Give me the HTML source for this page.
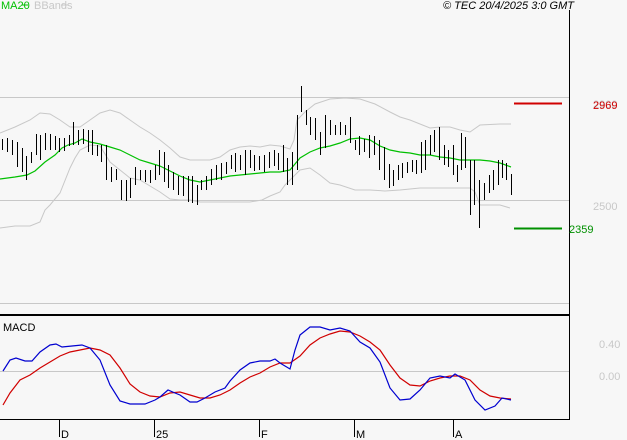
<!DOCTYPE html>
<html><head><meta charset="utf-8"><style>
html,body{margin:0;padding:0;background:#f7f7f7;width:627px;height:440px;overflow:hidden}
svg{display:block}
text{font-family:"Liberation Sans",sans-serif;font-size:11px}
</style></head><body>
<svg width="627" height="440" viewBox="0 0 627 440" shape-rendering="crispEdges">
<rect width="627" height="440" fill="#f7f7f7"/>
<text x="1" y="9" fill="#00c000" font-size="10">MA20</text>
<line x1="22" y1="5" x2="28" y2="5" stroke="#00c000"/>
<text x="34" y="9" fill="#c8c8c8" font-size="10">BBands</text>
<line x1="61" y1="5" x2="68" y2="5" stroke="#c8c8c8"/>
<text x="574" y="9" fill="#000" font-size="10.5" font-style="italic" text-anchor="end">© TEC 20/4/2025 3:0 GMT</text>
<line x1="0" y1="97.5" x2="569" y2="97.5" stroke="#c8c8c8"/>
<line x1="0" y1="200.5" x2="569" y2="200.5" stroke="#c8c8c8"/>
<line x1="0" y1="303.5" x2="569" y2="303.5" stroke="#c8c8c8"/>
<line x1="0" y1="371.5" x2="569" y2="371.5" stroke="#c8c8c8"/>
<line x1="0" y1="315" x2="569" y2="315" stroke="#000" stroke-width="2"/>
<line x1="0" y1="419.5" x2="569" y2="419.5" stroke="#000"/>
<line x1="569.5" y1="10" x2="569.5" y2="420" stroke="#000"/>
<g stroke="#000"><line x1="59.5" y1="420" x2="59.5" y2="437"/><line x1="154.5" y1="420" x2="154.5" y2="437"/><line x1="259.5" y1="420" x2="259.5" y2="437"/><line x1="354.5" y1="420" x2="354.5" y2="437"/><line x1="453.5" y1="420" x2="453.5" y2="437"/></g>
<g font-size="11" fill="#000"><text x="61" y="438">D</text><text x="156" y="438">25</text><text x="261" y="438">F</text><text x="356" y="438">M</text><text x="455" y="438">A</text></g>
<text x="3" y="331" font-size="10" fill="#000">MACD</text>
<g fill="#c8c8c8" font-size="11"><text x="593" y="108">2900</text><text x="593" y="210">2500</text><text x="599" y="348">0.40</text><text x="599" y="380">0.00</text></g>
<text x="593" y="109" fill="#d00000">2969</text>
<text x="569" y="233" fill="#009000">2359</text>
<line x1="514" y1="103.5" x2="562" y2="103.5" stroke="#d00000" stroke-width="2"/>
<line x1="514" y1="228.5" x2="562" y2="228.5" stroke="#009000" stroke-width="2"/>
<g fill="none" stroke="#c8c8c8" shape-rendering="auto">
<polyline points="0,133 15,127 30,120 40,113 50,114 60,120 70,127 80,127 90,120 100,113 110,110 120,113 130,120 140,127 150,133 160,140 170,148 180,157 190,160 200,160 210,160 220,157 230,150 240,147 250,146 260,147 270,145 280,146 290,149 294,140 297,120 305,112 315,104 330,99 345,98 360,99 375,104 390,112 400,117 410,120 420,124 430,128 440,127 450,127 460,130 470,132 480,125 500,124 511,124"/>
<polyline points="0,228 15,226 30,226 40,222 45,210 50,205 60,193 70,168 75,158 80,150 90,145 100,146 110,162 120,170 130,178 140,180 150,186 160,192 170,199 180,200 190,200 200,202 215,202 230,202 250,202 262,200 270,196 280,192 285,185 290,180 300,170 310,168 320,175 330,183 340,185 355,190 370,190 385,191 400,190 420,188 440,188 460,188 470,188 475,192 480,205 490,205 500,205 510,208"/>
</g>
<polyline fill="none" stroke="#00c000" stroke-width="1.2" shape-rendering="auto" points="0,179 15,177 27,175 35,171 45,162 55,155 62,148 68,145 75,143 82,139 90,142 100,144 110,147 120,150 130,155 140,160 150,163 160,166 170,171 180,176 190,180 200,182 210,180 220,178 230,176 240,175 250,174 260,173 270,172 280,172 290,170 300,158 310,152 320,148 330,146 340,143 350,139 360,138 370,140 380,146 390,150 400,152 410,153 420,155 430,155 440,157 450,158 460,160 470,160 480,160 490,161 500,163 511,167"/>
<path stroke="#000" stroke-width="1" fill="none" d="M2.5 139V150M7.5 138V152M12.5 140V155M17.5 142V167M22.5 148V172M26.5 156V180M31.5 152V163M36.5 134V155M40.5 135V160M45.5 133V150M50.5 134V150M55.5 136V150M59.5 138V152M64.5 138V151M69.5 135V146M73.5 122V145M78.5 130V145M83.5 129V144M88.5 130V152M92.5 130V155M97.5 145V156M101.5 145V162M106.5 145V180M111.5 167V182M116.5 169V180M121.5 180V200M126.5 180V201M130.5 178V198M135.5 167V185M140.5 170V180M145.5 170V182M150.5 170V183M155.5 165V180M159.5 150V175M164.5 152V182M168.5 165V188M173.5 172V190M178.5 176V195M183.5 176V196M188.5 176V202M192.5 176V203M197.5 185V205M201.5 180V190M206.5 176V190M211.5 169V185M216.5 165V180M221.5 163V180M226.5 162V174M231.5 155V169M235.5 153V172M240.5 155V170M245.5 150V175M250.5 150V168M254.5 155V171M259.5 156V170M264.5 155V172M269.5 152V168M274.5 150V166M278.5 153V170M283.5 145V172M287.5 158V185M292.5 152V185M297.5 115V170M301.5 86V112M306.5 110V125M310.5 117V135M315.5 118V140M320.5 132V155M325.5 115V148M330.5 120V135M335.5 125V135M340.5 122V135M345.5 125V135M350.5 117V143M355.5 140V150M359.5 136V155M364.5 139V152M369.5 135V158M374.5 136V155M379.5 140V170M384.5 147V180M389.5 164V188M393.5 170V186M398.5 165V180M402.5 163V178M407.5 162V173M412.5 160V172M416.5 160V174M421.5 142V173M425.5 140V170M430.5 135V155M434.5 130V152M439.5 127V160M444.5 145V165M448.5 150V167M453.5 145V175M457.5 165V182M461.5 133V170M465.5 137V168M470.5 160V215M474.5 160V205M479.5 180V228M484.5 183V200M489.5 175V193M493.5 170V190M498.5 160V185M502.5 160V178M506.5 163V180M511.5 174V195"/>
<g fill="none" stroke-width="1.2" shape-rendering="auto">
<polyline stroke="#d00000" points="3,405 10,393 20,380 30,375 40,368 50,362 60,356 70,352 80,350 90,348 100,350 110,355 120,368 130,384 140,392 150,396 160,397 170,393 180,392 190,395 200,398 210,398 220,395 230,390 240,383 250,377 260,373 270,367 280,363 290,363 300,356 310,345 320,338 330,334 340,331 350,332 360,336 370,342 380,350 390,365 400,378 410,385 420,386 430,381 440,378 450,376 460,376 470,380 480,390 490,396 500,398 511,399"/>
<polyline stroke="#0000d0" points="3,371 10,360 16,358 25,361 32,361 40,352 50,345 56,344 62,347 72,346 82,345 90,348 100,360 110,385 120,401 130,404 145,404 155,400 160,397 168,390 175,393 180,395 190,402 197,402 205,398 215,392 225,388 230,381 240,370 250,363 260,361 270,361 275,359 280,363 285,366 290,369 295,350 300,335 310,327 320,327 330,330 340,328 350,331 360,342 370,348 380,362 390,388 400,400 410,399 420,390 430,378 440,376 450,378 455,374 465,380 475,400 485,410 495,406 502,398 511,400"/>
</g>
</svg>
</body></html>
